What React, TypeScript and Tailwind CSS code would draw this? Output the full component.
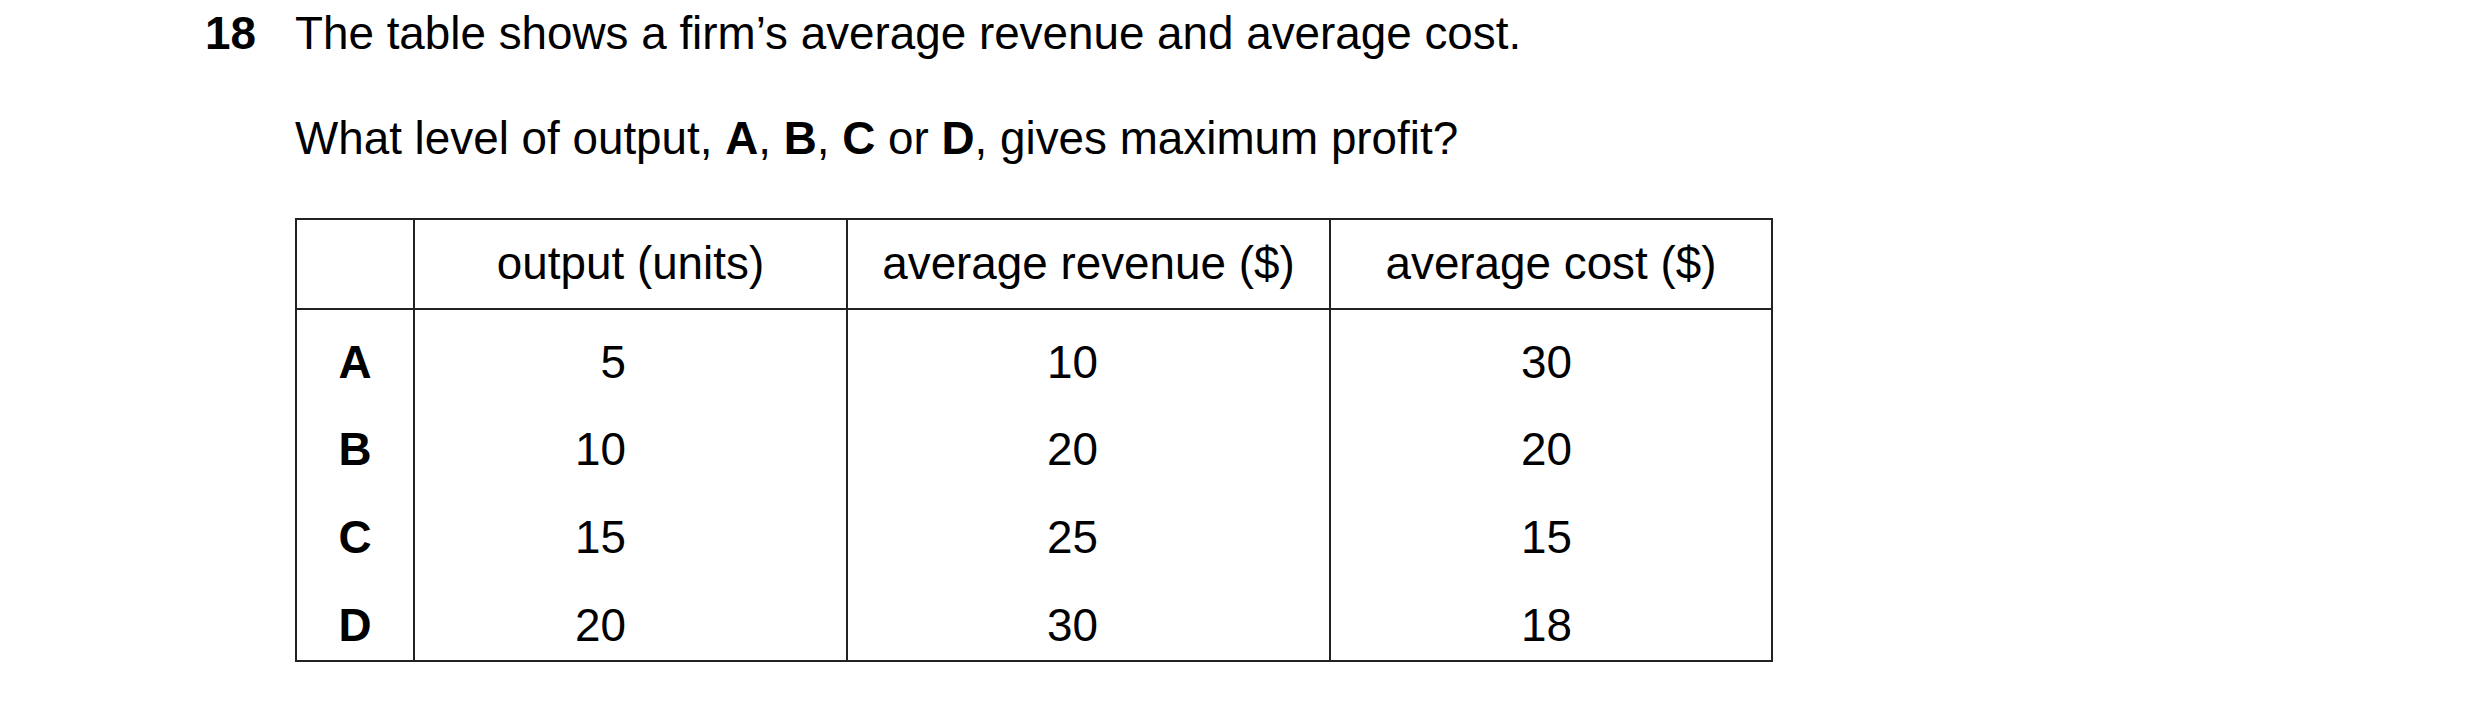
const rows = [
  { key: 'A', output: '5', revenue: '10', cost: '30' },
  { key: 'B', output: '10', revenue: '20', cost: '20' },
  { key: 'C', output: '15', revenue: '25', cost: '15' },
  { key: 'D', output: '20', revenue: '30', cost: '18' },
];

export default function App() {
  return (
    <div className="min-h-screen bg-white text-black font-['Liberation_Sans',Arial,sans-serif] text-[45.8px] leading-[52px]">
      <div className="flex pl-[205px] pt-[8px]">
        <span className="w-[90px] shrink-0 font-bold">18</span>
        <div>
          <p>The table shows a firm’s average revenue and average cost.</p>
          <p className="mt-[53px]">
            What level of output, <b>A</b>, <b>B</b>, <b>C</b> or <b>D</b>, gives maximum profit?
          </p>

          {/* data table */}
          <table className="mt-[53px] w-[1478px] table-fixed border-collapse border-2 border-[#222]">
            <colgroup>
              <col className="w-[118px]" />
              <col className="w-[433px]" />
              <col className="w-[483px]" />
              <col className="w-[442px]" />
            </colgroup>
            <thead>
              <tr>
                <th className="h-[90px] border-2 border-[#222] p-0" />
                <th className="h-[90px] border-2 border-[#222] p-0 text-center font-normal">output (units)</th>
                <th className="h-[90px] border-2 border-[#222] p-0 text-center font-normal">average revenue ($)</th>
                <th className="h-[90px] border-2 border-[#222] p-0 text-center font-normal">average cost ($)</th>
              </tr>
            </thead>
            <tbody>
              {rows.map((r) => (
                <tr key={r.key}>
                  <td className="h-[88px] border-x-2 border-[#222] p-0 pt-[27px] align-top text-center font-bold">{r.key}</td>
                  <td className="h-[88px] border-x-2 border-[#222] p-0 pt-[27px] pr-[220px] align-top text-right">{r.output}</td>
                  <td className="h-[88px] border-x-2 border-[#222] p-0 pt-[27px] pr-[231px] align-top text-right">{r.revenue}</td>
                  <td className="h-[88px] border-x-2 border-[#222] p-0 pt-[27px] pr-[199px] align-top text-right">{r.cost}</td>
                </tr>
              ))}
            </tbody>
          </table>
        </div>
      </div>
    </div>
  );
}
